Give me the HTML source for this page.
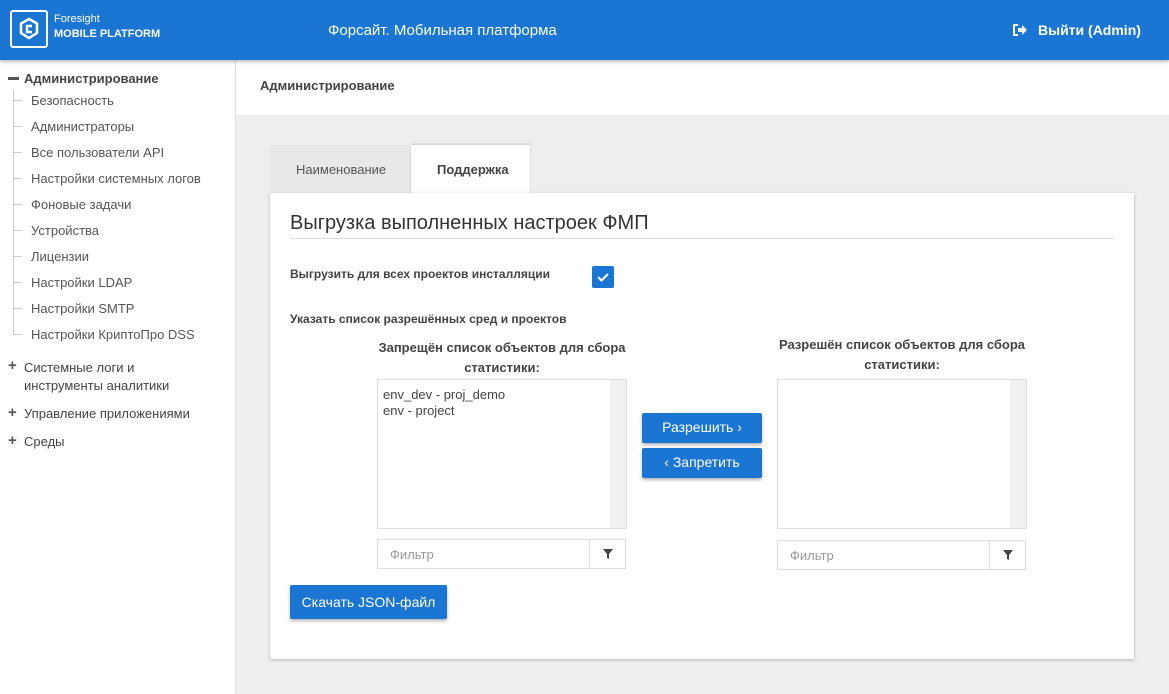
<!DOCTYPE html>
<html><head><meta charset="utf-8"><style>
*{box-sizing:border-box;margin:0;padding:0}
body{width:1169px;height:694px;overflow:hidden;font-family:"Liberation Sans",sans-serif;background:#eeeeee;position:relative;color:#444}
.top{position:absolute;left:0;top:0;width:1169px;height:60px;background:#1a76d2;color:#fff;box-shadow:0 2px 3px rgba(0,0,0,.25);z-index:2}
.abs{position:absolute}
.side{position:absolute;left:0;top:60px;width:236px;height:634px;background:#fff;border-right:1px solid #ddd;font-size:13px}
.side .it{position:absolute;left:31px;color:#555}
.side .tick{position:absolute;left:13px;width:9px;border-top:1px solid #ccc}
.hdr{position:absolute;left:236px;top:60px;width:933px;height:55px;background:#fff;font-size:13px;font-weight:bold;color:#444;padding:18px 24px}
.card{position:absolute;left:270px;top:193px;width:864px;height:466px;background:#fff;box-shadow:0 1px 3px rgba(0,0,0,.25)}
.btn{position:absolute;background:#1a76d2;color:#fff;font-size:14px;text-align:center;border-radius:2px;box-shadow:0 2px 3px rgba(0,0,0,.3)}
.list{position:absolute;border:1px solid #ddd;background:#fff;font-size:13px;color:#444}
.sb{position:absolute;right:0;top:0;width:16px;height:100%;background:#f1f1f1}
.filt{position:absolute;border:1px solid #ddd;height:30px;font-size:13px;color:#999;padding:7px 12px}
.fb{position:absolute;border:1px solid #ddd;width:37px;height:30px}
.lbl{position:absolute;font-size:13px;font-weight:bold;color:#444;text-align:center;line-height:20px}
.plus{position:absolute;left:8px;font-weight:bold;color:#555;font-size:15px}
</style></head><body>
<div class="top">
 <div class="abs" style="left:10px;top:10px;width:38px;height:38px;border:2px solid #fff;border-radius:3px">
  <svg width="34" height="34" viewBox="0 0 34 34" style="position:absolute;left:0;top:0"><path d="M17 7 L25 11.5 V21 L17 26 L9 21 V11.5 Z" fill="none" stroke="#fff" stroke-width="2.5"/><path d="M20 14 H15 V20 H20" fill="none" stroke="#fff" stroke-width="2.5"/></svg>
 </div>
 <div class="abs" style="left:54px;top:13px;font-size:11px">Foresight</div>
 <div class="abs" style="left:54px;top:28px;font-size:11px;font-weight:bold">MOBILE PLATFORM</div>
 <div class="abs" style="left:328px;top:22px;font-size:15px">Форсайт. Мобильная платформа</div>
 <svg class="abs" style="left:1013px;top:24px" width="14" height="12" viewBox="0 0 14 12"><path d="M5 1 H1 V11 H5" fill="none" stroke="#fff" stroke-width="2"/><path d="M5 4 H9 V1 L14 6 L9 11 V8 H5 Z" fill="#fff"/></svg>
 <div class="abs" style="left:1038px;top:22px;font-size:14px;font-weight:bold">Выйти (Admin)</div>
</div>
<div class="side">
 <div class="abs" style="left:8px;top:17px;width:11px;height:3px;background:#555"></div>
 <div class="abs" style="left:24px;top:11px;font-weight:bold;color:#444">Администрирование</div>
 <div class="abs" style="left:13px;top:30px;height:245px;border-left:1px solid #ccc"></div>
 <div class="tick" style="top:40px"></div><div class="it" style="top:33px">Безопасность</div>
 <div class="tick" style="top:66px"></div><div class="it" style="top:59px">Администраторы</div>
 <div class="tick" style="top:92px"></div><div class="it" style="top:85px">Все пользователи API</div>
 <div class="tick" style="top:118px"></div><div class="it" style="top:111px">Настройки системных логов</div>
 <div class="tick" style="top:144px"></div><div class="it" style="top:137px">Фоновые задачи</div>
 <div class="tick" style="top:170px"></div><div class="it" style="top:163px">Устройства</div>
 <div class="tick" style="top:196px"></div><div class="it" style="top:189px">Лицензии</div>
 <div class="tick" style="top:222px"></div><div class="it" style="top:215px">Настройки LDAP</div>
 <div class="tick" style="top:248px"></div><div class="it" style="top:241px">Настройки SMTP</div>
 <div class="tick" style="top:274px"></div><div class="it" style="top:267px">Настройки КриптоПро DSS</div>
 <div class="plus" style="top:297px">+</div>
 <div class="abs" style="left:24px;top:299px;color:#444;line-height:18px">Системные логи и<br>инструменты аналитики</div>
 <div class="plus" style="top:344px">+</div>
 <div class="abs" style="left:24px;top:346px;color:#444">Управление приложениями</div>
 <div class="plus" style="top:372px">+</div>
 <div class="abs" style="left:24px;top:374px;color:#444">Среды</div>
</div>
<div class="hdr">Администрирование</div>
<div class="abs" style="left:270px;top:145px;width:141px;height:48px;background:#e8e8e8;font-size:13px;color:#555;padding:17px 26px">Наименование</div>
<div class="abs" style="left:411px;top:145px;width:119px;height:49px;background:#fff;font-size:13px;font-weight:bold;color:#444;padding:17px 26px;box-shadow:0 -1px 2px rgba(0,0,0,.15)">Поддержка</div>
<div class="card">
 <div class="abs" style="left:20px;top:19px;font-size:20px;color:#333">Выгрузка выполненных настроек ФМП</div>
 <div class="abs" style="left:20px;top:45px;width:824px;border-top:1px solid #ddd"></div>
 <div class="abs" style="left:20px;top:74px;font-size:12px;font-weight:bold">Выгрузить для всех проектов инсталляции</div>
 <div class="abs" style="left:322px;top:73px;width:22px;height:22px;background:#1a76d2;border-radius:2px"><svg width="22" height="22"><path d="M6 11 L9.5 14.5 L16 8" fill="none" stroke="#fff" stroke-width="2"/></svg></div>
 <div class="abs" style="left:20px;top:119px;font-size:12px;font-weight:bold">Указать список разрешённых сред и проектов</div>
 <div class="lbl" style="left:107px;top:145px;width:250px">Запрещён список объектов для сбора<br>статистики:</div>
 <div class="lbl" style="left:507px;top:142px;width:250px">Разрешён список объектов для сбора<br>статистики:</div>
 <div class="list" style="left:107px;top:186px;width:250px;height:150px;padding:7px 5px;line-height:16px">env_dev - proj_demo<br>env - project<div class="sb"></div></div>
 <div class="list" style="left:507px;top:186px;width:250px;height:150px"><div class="sb"></div></div>
 <div class="btn" style="left:372px;top:220px;width:120px;height:30px;line-height:29px">Разрешить ›</div>
 <div class="btn" style="left:372px;top:255px;width:120px;height:30px;line-height:29px">‹ Запретить</div>
 <div class="filt" style="left:107px;top:346px;width:213px">Фильтр</div>
 <div class="fb" style="left:319px;top:346px"><svg width="35" height="28"><path d="M13 9 H23 L19 14 V19 L17 18 V14 Z" fill="#444"/></svg></div>
 <div class="filt" style="left:507px;top:347px;width:213px">Фильтр</div>
 <div class="fb" style="left:719px;top:347px"><svg width="35" height="28"><path d="M13 9 H23 L19 14 V19 L17 18 V14 Z" fill="#444"/></svg></div>
 <div class="btn" style="left:20px;top:392px;width:157px;height:34px;line-height:34px">Скачать JSON-файл</div>
</div>
</body></html>
